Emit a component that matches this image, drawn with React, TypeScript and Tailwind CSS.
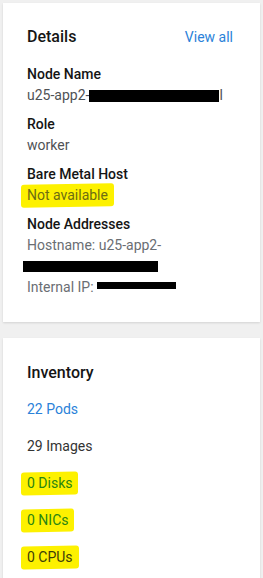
import React from 'react';

const Mark: React.FC<{ children: React.ReactNode; className?: string }> = ({ children, className }) => (
  <span
    className={`inline-block -ml-[6px] px-[6px] -my-[1px] py-[1px] bg-[#fdf100] rounded-[3px] -skew-y-1 ${className ?? ''}`}
  >
    <span className="inline-block skew-y-1">{children}</span>
  </span>
);

const Redact: React.FC<{ w: string; h?: string }> = ({ w, h }) => (
  <span className={`inline-block align-middle bg-black ${w} ${h ?? 'h-[12px]'}`} />
);

const Field: React.FC<{ label: string; children: React.ReactNode }> = ({ label, children }) => (
  <div className="flex flex-col">
    <div className="font-medium text-[#151515]">{label}</div>
    {children}
  </div>
);

const App: React.FC = () => {
  return (
    <div
      className="min-h-[578px] bg-[#f0f0f0] p-[3px] flex flex-col gap-4 text-[14px] leading-[21px]"
      style={{ fontFamily: 'Roboto, "Liberation Sans", sans-serif' }}
    >
      <section className="bg-white shadow-[0_1px_2px_rgba(0,0,0,0.12)] px-6 pt-[24px] pb-6">
        <div className="flex items-center justify-between mb-[17px]">
          <h2 className="text-[16px] leading-[20px] font-medium text-[#151515]">Details</h2>
          <a className="text-[#2b82d9] leading-[20px] mr-[3px]">View all</a>
        </div>
        <div className="flex flex-col gap-2">
          <Field label="Node Name">
            <div className="text-[#4f5255] flex items-center">
              u25-app2-<Redact w="w-[130px]" />
              <span>l</span>
            </div>
          </Field>
          <Field label="Role">
            <div className="text-[#4f5255]">worker</div>
          </Field>
          <Field label="Bare Metal Host">
            <div className="h-[21px]">
              <Mark className="text-[#6d6d12]">Not available</Mark>
            </div>
          </Field>
          <Field label="Node Addresses">
            <div className="text-[#6a6e73]">Hostname: u25-app2-</div>
            <div className="flex items-center h-[21px] -ml-[4px]">
              <Redact w="w-[135px]" h="h-[11px]" />
            </div>
            <div className="text-[#6a6e73] flex items-center">
              Internal IP:&nbsp;
              <span className="inline-block bg-black w-[79px] h-[7px] -translate-y-[2px]" />
            </div>
          </Field>
        </div>
      </section>

      <section className="bg-white shadow-[0_1px_2px_rgba(0,0,0,0.12)] px-6 pt-[24px] pb-6 flex-1">
        <div className="flex flex-col gap-4">
          <h2 className="text-[16px] leading-[21px] font-medium text-[#151515]">Inventory</h2>
          <a className="text-[#2b82d9]">22 Pods</a>
          <div className="text-[#333333]">29 Images</div>
          <div className="h-[21px]">
            <Mark className="text-[#2a8612]">0 Disks</Mark>
          </div>
          <div className="h-[21px]">
            <Mark className="text-[#2a8612]">0 NICs</Mark>
          </div>
          <div className="h-[21px]">
            <Mark className="text-[#3e3e08]">0 CPUs</Mark>
          </div>
        </div>
      </section>
    </div>
  );
};

export default App;
